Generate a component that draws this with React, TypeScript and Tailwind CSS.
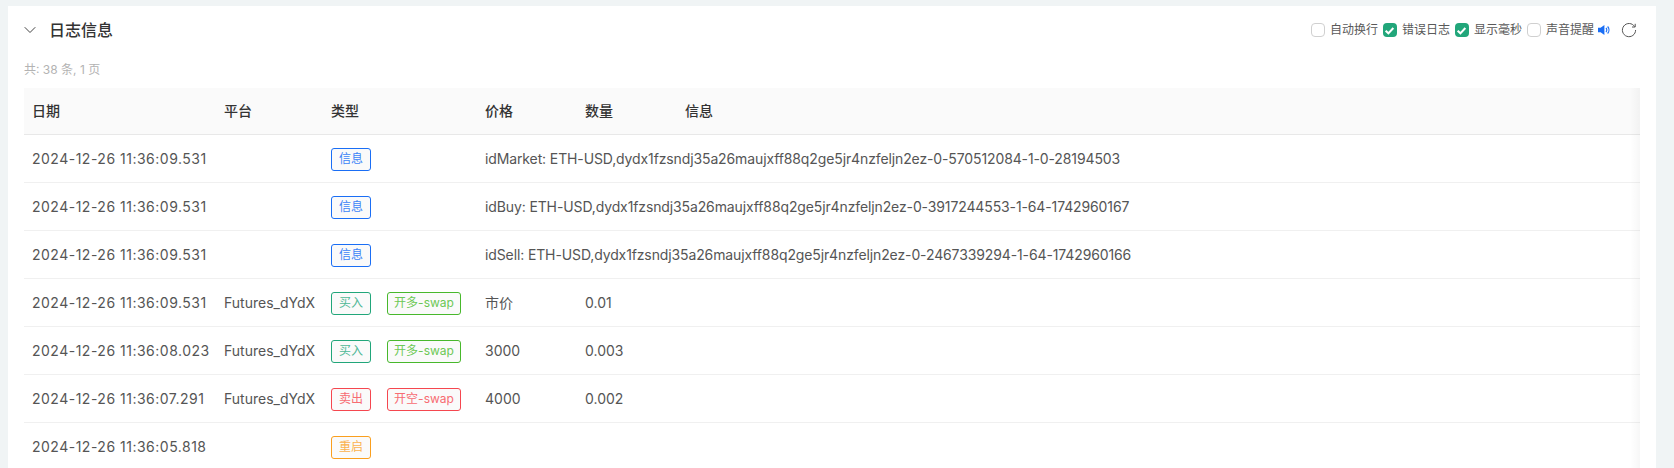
import { ChevronDown } from "lucide-react";

type Tag = { text: string; tone: string };

type Row = {
  date: string;
  platform?: string;
  tags: Tag[];
  price?: string;
  amount?: string;
  info?: string;
};

const info = "text-[#3d85f7] border-[#1a6ef5] w-[40px]";
const buy = "text-[#4fb896] border-[#21a67a] w-[40px]";
const sell = "text-[#f76c72] border-[#f5474f] w-[40px]";
const restart = "text-[#fbb24f] border-[#fa9f1e] w-[40px]";
const openLong = "text-[#6cc855] border-[#48b82c] w-[74px]";
const openShort = "text-[#f76c72] border-[#f5474f] w-[74px]";

const rows: Row[] = [
  {
    date: "2024-12-26 11:36:09.531",
    tags: [{ text: "信息", tone: info }],
    info: "idMarket: ETH-USD,dydx1fzsndj35a26maujxff88q2ge5jr4nzfeljn2ez-0-570512084-1-0-28194503",
  },
  {
    date: "2024-12-26 11:36:09.531",
    tags: [{ text: "信息", tone: info }],
    info: "idBuy: ETH-USD,dydx1fzsndj35a26maujxff88q2ge5jr4nzfeljn2ez-0-3917244553-1-64-1742960167",
  },
  {
    date: "2024-12-26 11:36:09.531",
    tags: [{ text: "信息", tone: info }],
    info: "idSell: ETH-USD,dydx1fzsndj35a26maujxff88q2ge5jr4nzfeljn2ez-0-2467339294-1-64-1742960166",
  },
  {
    date: "2024-12-26 11:36:09.531",
    platform: "Futures_dYdX",
    tags: [{ text: "买入", tone: buy }, { text: "开多-swap", tone: openLong }],
    price: "市价",
    amount: "0.01",
  },
  {
    date: "2024-12-26 11:36:08.023",
    platform: "Futures_dYdX",
    tags: [{ text: "买入", tone: buy }, { text: "开多-swap", tone: openLong }],
    price: "3000",
    amount: "0.003",
  },
  {
    date: "2024-12-26 11:36:07.291",
    platform: "Futures_dYdX",
    tags: [{ text: "卖出", tone: sell }, { text: "开空-swap", tone: openShort }],
    price: "4000",
    amount: "0.002",
  },
  {
    date: "2024-12-26 11:36:05.818",
    tags: [{ text: "重启", tone: restart }],
  },
];

function Check({ label, checked }: { label: string; checked?: boolean }) {
  return (
    <label className="flex items-center gap-[5px]">
      {checked ? (
        <span className="w-[14px] h-[14px] rounded-[4px] bg-[#21a67a] flex items-center justify-center">
          <svg width="11" height="11" viewBox="0 0 10 10" fill="none">
            <path d="M1.5 5.2L4 7.6L8.5 2.8" stroke="white" strokeWidth="1.9" />
          </svg>
        </span>
      ) : (
        <span className="w-[14px] h-[14px] rounded-[4px] bg-white border border-[#d0d0d0]" />
      )}
      <span className="text-xs text-[#595959]">{label}</span>
    </label>
  );
}

export default function App() {
  return (
    <div className="h-screen overflow-hidden bg-[#f0f4f5] pl-[8px] pr-[18px] pt-[6px] font-['Inter','Noto_Sans_CJK_SC',sans-serif]">
      <div className="h-full bg-white px-[16px] overflow-hidden">
        {/* Title bar */}
        <div className="h-[47px] flex items-center justify-between">
          <div className="flex items-center">
            <ChevronDown size={20} strokeWidth={1.2} className="text-[#444] -ml-[4px] mr-[9px]" />
            <span className="text-base font-medium text-[#333]">日志信息</span>
          </div>
          <div className="flex items-center gap-[5px] pr-[2px] pt-[1px]">
            <Check label="自动换行" />
            <Check label="错误日志" checked />
            <Check label="显示毫秒" checked />
            <Check label="声音提醒" />
            <svg width="12" height="12" viewBox="0 0 12 12" className="-ml-[1px]">
              <path d="M0 3.8H2.6L6.4 1V11L2.6 8.2H0Z" fill="#1a6ef5" />
              <path d="M8 4C9 5 9 7 8 8M9.6 2.5C11.4 4.5 11.4 7.5 9.6 9.5" stroke="#1a6ef5" strokeWidth="1.2" fill="none" />
            </svg>
            <svg width="18" height="18" viewBox="0 0 18 18" fill="none" stroke="#555" strokeWidth="1" className="ml-[5px]">
              <path d="M14.6 5.6A6.6 6.6 0 1 0 15.6 9" />
              <path d="M15.2 2.8V6H12" />
            </svg>
          </div>
        </div>

        <p className="h-[35px] pt-[9px] text-xs text-[#b3b3b3]">共: 38 条, 1 页</p>

        {/* Log table */}
        <div className="relative">
          <table className="w-full table-fixed border-collapse text-sm text-[#555]">
            <colgroup>
              <col className="w-[192px]" />
              <col className="w-[107px]" />
              <col className="w-[154px]" />
              <col className="w-[100px]" />
              <col className="w-[100px]" />
              <col />
            </colgroup>
            <thead>
              <tr className="h-[46px] bg-[#fafafa] border-b border-[#e8e8e8]">
                {["日期", "平台", "类型", "价格", "数量", "信息"].map((h) => (
                  <th key={h} className="px-[8px] text-left font-medium text-[#333]">
                    {h}
                  </th>
                ))}
              </tr>
            </thead>
            <tbody>
              {rows.map((row, i) => (
                <tr key={i} className="h-[48px] border-b border-[#f0f0f0]">
                  <td className="px-[8px] pt-[2px] whitespace-nowrap tracking-[0.5px]">{row.date}</td>
                  <td className="px-[8px] pt-[2px] whitespace-nowrap">{row.platform}</td>
                  <td className="px-[8px] pt-[2px]">
                    <div className="flex gap-[16px]">
                      {row.tags.map((t) => (
                        <span
                          key={t.text}
                          className={`h-[23px] shrink-0 rounded-[3px] border bg-[#fafafa] text-xs flex items-center justify-center ${t.tone}`}
                        >
                          {t.text}
                        </span>
                      ))}
                    </div>
                  </td>
                  {row.info ? (
                    <td colSpan={3} className="px-[8px] pt-[2px] whitespace-nowrap tracking-[-0.12px]">
                      {row.info}
                    </td>
                  ) : (
                    <>
                      <td className="px-[8px] pt-[2px]">{row.price}</td>
                      <td className="px-[8px] pt-[2px]">{row.amount}</td>
                      <td className="px-[8px] pt-[2px]" />
                    </>
                  )}
                </tr>
              ))}
            </tbody>
          </table>
          {/* fixed column shadow on the right edge */}
          <div className="absolute top-0 right-0 bottom-0 w-[10px] bg-gradient-to-r from-transparent to-[#00000008]" />
        </div>
      </div>
    </div>
  );
}
